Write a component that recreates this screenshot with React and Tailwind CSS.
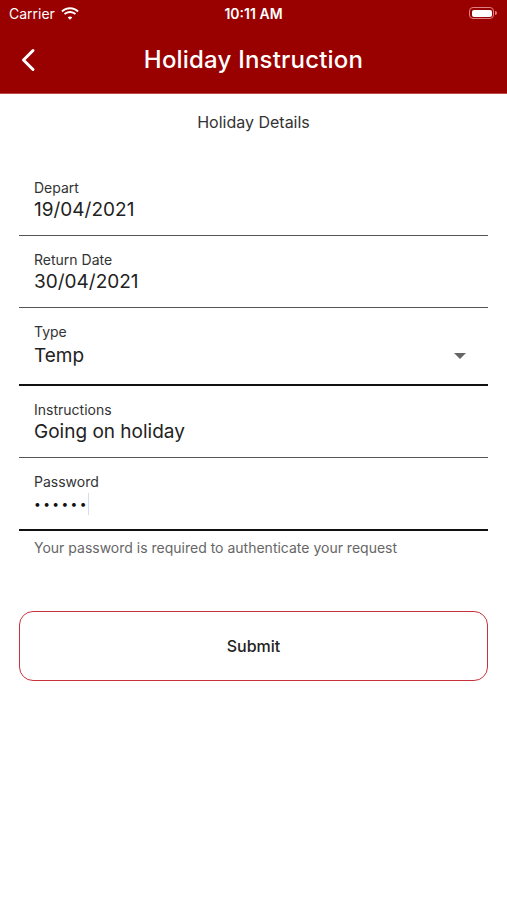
import React from "react";

const fields = [
  { label: "Depart", value: "19/04/2021" },
  { label: "Return Date", value: "30/04/2021" },
];

function Field({ label, children, thick, extra }) {
  return (
    <div
      className={`pl-[15px] pt-4 ${extra || "pb-[13px]"} ${
        thick ? "border-b-2 border-[#111]" : "border-b border-[#555]"
      }`}
    >
      <div className="text-[14px] leading-4 text-[#333]">{label}</div>
      {children}
    </div>
  );
}

export default function App() {
  return (
    <div className="w-[507px] h-[900px] bg-white" style={{ fontFamily: "Inter, 'Noto Sans', sans-serif" }}>
      {/* status + nav */}
      <div className="bg-[#990000] text-white">
        <div className="h-[26px] flex items-center justify-between px-[9px] relative">
          <div className="flex items-center gap-[6px] text-[14px]">
            <span>Carrier</span>
            <svg width="18" height="13" viewBox="0 0 18 13" fill="white">
              <path d="M9 2.2c2.9 0 5.5 1.1 7.4 3l1.3-1.4C15.5 1.6 12.4.3 9 .3S2.5 1.6.3 3.8l1.3 1.4C3.5 3.3 6.1 2.2 9 2.2z" />
              <path d="M9 5.9c1.9 0 3.6.7 4.8 1.9l1.3-1.4C13.5 4.9 11.4 4 9 4s-4.5.9-6.1 2.4l1.3 1.4C5.4 6.6 7.1 5.9 9 5.9z" />
              <path d="M9 9.5c.9 0 1.7.3 2.3.9L9 12.8l-2.3-2.4c.6-.6 1.4-.9 2.3-.9z" />
            </svg>
          </div>
          <div className="absolute left-0 right-0 text-center text-[14px] font-semibold pointer-events-none">10:11 AM</div>
          <div className="flex items-center pr-[1px]">
            <div className="w-[25px] h-[12px] rounded-[4px] border border-[#e08080] p-[1.5px]">
              <div className="w-full h-full bg-white rounded-[2px]" />
            </div>
            <div className="w-[2px] h-[4px] bg-[#e08080] rounded-r-sm ml-[1px]" />
          </div>
        </div>
        <div className="h-[68px] flex items-center relative border-b border-[#c04848]">
          <svg className="absolute left-[20px] top-[22px]" width="16" height="24" viewBox="0 0 16 24" fill="none">
            <path d="M13 2.5 3.5 12l9.5 9.5" stroke="white" strokeWidth="3" strokeLinecap="round" strokeLinejoin="round" />
          </svg>
          <div className="w-full text-center text-[24px] font-medium tracking-[0.2px]">Holiday Instruction</div>
        </div>
      </div>

      <div className="mt-[16px] text-center text-[16px] leading-6 text-[#333]">Holiday Details</div>

      <div className="px-[19px] mt-[30px]">
        {fields.map((f) => (
          <Field key={f.label} label={f.label}>
            <div className="text-[19px] leading-6 mt-0.5 text-[#222]">{f.value}</div>
          </Field>
        ))}
        <Field label="Type" thick extra="pb-[16px]">
          <div className="flex items-center justify-between mt-[4px] pr-[22px]">
            <div className="text-[19px] leading-6 text-[#222]">Temp</div>
            <svg width="12" height="6" viewBox="0 0 12 6">
              <path d="M0 0h12L6 6z" fill="#666" />
            </svg>
          </div>
        </Field>
        <Field label="Instructions">
          <div className="text-[19px] leading-6 mt-0.5 text-[#222]">Going on holiday</div>
        </Field>
        <Field label="Password" thick>
          <div className="flex items-center h-6 mt-0.5">
            <span className="text-[12px] tracking-[2.4px] text-[#111] leading-6">••••••</span>
            <span className="w-px h-[22px] bg-[#cfe0f5] -ml-[1px]" />
          </div>
        </Field>
        <div className="mt-[7px] pl-[15px] text-[14px] leading-5 text-[#666]">
          Your password is required to authenticate your request
        </div>
        <button className="mt-[53px] w-full h-[70px] rounded-[14px] border-[1.5px] border-[#c8323c] bg-white text-[16px] font-medium text-[#222]">
          Submit
        </button>
      </div>
    </div>
  );
}
